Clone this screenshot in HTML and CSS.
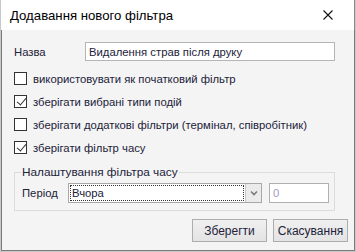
FILE: index.html
```html
<!DOCTYPE html>
<html lang="uk">
<head>
    <meta charset="UTF-8">
    <meta name="viewport" content="width=device-width, initial-scale=1.0">
    <title>Додавання нового фільтра</title>
    <link rel="stylesheet" href="styles.css">
</head>
<body>
    <div class="dialog">
        <div class="titlebar">
            <span class="title">Додавання нового фільтра</span>
            <svg class="close" width="10" height="10" viewBox="0 0 10 10">
                <path d="M0.5 0.5 L9.5 9.5 M9.5 0.5 L0.5 9.5" stroke="#111" stroke-width="1.1" fill="none"/>
            </svg>
        </div>
        <div class="content">
            <div class="name-row">
                <label class="name-label" for="name">Назва</label>
                <input type="text" id="name" class="text-input" value="Видалення страв після друку">
            </div>

            <label class="check-row">
                <span class="box"></span>
                <span>використовувати як початковий фільтр</span>
            </label>
            <label class="check-row">
                <span class="box checked"></span>
                <span>зберігати вибрані типи подій</span>
            </label>
            <label class="check-row">
                <span class="box"></span>
                <span>зберігати додаткові фільтри (термінал, співробітник)</span>
            </label>
            <label class="check-row">
                <span class="box checked"></span>
                <span>зберігати фільтр часу</span>
            </label>

            <fieldset class="group">
                <legend>Налаштування фільтра часу</legend>
                <div class="period-row">
                    <span class="period-label">Період</span>
                    <div class="select">
                        <span class="select-value"><span class="focus">Вчора</span></span>
                        <span class="select-arrow">
                            <svg width="8" height="6" viewBox="0 0 8 6">
                                <path d="M1 1.5 L4 4.5 L7 1.5" stroke="#7a7a7a" stroke-width="1.6" fill="none"/>
                            </svg>
                        </span>
                    </div>
                    <div class="number">0</div>
                </div>
            </fieldset>

            <div class="buttons">
                <button class="btn">Зберегти</button>
                <button class="btn">Скасування</button>
            </div>
        </div>
    </div>
</body>
</html>
```

FILE: styles.css
```css
* {
    box-sizing: border-box;
}
body {
    margin: 0;
    font-family: "Liberation Sans", Arial, sans-serif;
    font-size: 11.3px;
    color: #22223a;
    background-color: #fff;
}
.dialog {
    width: 356px;
    height: 252px;
    border: 1px solid #c9c9c9;
    border-top: none;
    display: flex;
    flex-direction: column;
}
.titlebar {
    height: 30px;
    flex: none;
    background-color: #fff;
    display: flex;
    align-items: center;
    justify-content: space-between;
    padding: 0 21px 0 9px;
    border-right: 1px solid #8a8a8a;
}
.title {
    font-size: 13.2px;
    color: #000;
}
.content {
    flex: 1;
    background-color: #f4f4f4;
    border: 1px solid #7a7a7a;
    border-top: none;
    padding: 12px 6px 0 12px;
    display: flex;
    flex-direction: column;
}
.name-row {
    display: flex;
    align-items: center;
    margin-right: 13px;
}
.name-label {
    width: 71px;
}
.text-input {
    flex: 1;
    height: 19px;
    border: 1px solid #b5b5b5;
    padding: 0 3px;
    font: inherit;
    color: #22223a;
    background-color: #fff;
}
.check-row {
    display: flex;
    align-items: center;
    gap: 6px;
    height: 23px;
}
.check-row:first-of-type {
    margin-top: 6px;
}
.box {
    width: 13px;
    height: 13px;
    border: 1px solid #333;
    background-color: #fff;
    position: relative;
}
.box.checked::after {
    content: "";
    position: absolute;
    left: 4px;
    top: 0px;
    width: 4px;
    height: 8px;
    border: solid #333;
    border-width: 0 1px 1px 0;
    transform: rotate(40deg);
}
.group {
    margin: 6px 13px 0 0;
    padding: 4px 5px 7px 7px;
    border: 1px solid #dcdcdc;
}
.group legend {
    padding: 0 1px;
    margin-left: -1px;
    font-size: 11.8px;
    color: #22223a;
}
.period-row {
    display: flex;
    align-items: center;
}
.period-label {
    width: 46px;
}
.select {
    width: 194px;
    height: 20px;
    border: 1px solid #a8a8a8;
    background-color: #fff;
    display: flex;
}
.select-value {
    flex: 1;
    padding: 1px;
    display: flex;
}
.focus {
    flex: 1;
    border: 1px dotted #333;
    padding: 0 1px;
    line-height: 14px;
}
.select-arrow {
    width: 16px;
    border-left: 1px solid #c8c8c8;
    background-color: #ebebeb;
    display: flex;
    align-items: center;
    justify-content: center;
}
.number {
    width: 60px;
    height: 20px;
    margin-left: 7px;
    border: 1px solid #b0b0b0;
    background-color: #fff;
    color: #a898c4;
    padding: 2px 3px;
    line-height: 14px;
}
.buttons {
    display: flex;
    justify-content: flex-end;
    gap: 6px;
    margin-top: 8px;
}
.btn {
    width: 75px;
    height: 23px;
    font: inherit;
    font-size: 12px;
    color: #22223a;
    border: 1px solid #adadad;
    background: linear-gradient(#f0f0f0, #e3e3e3);
    padding: 0;
}
```
